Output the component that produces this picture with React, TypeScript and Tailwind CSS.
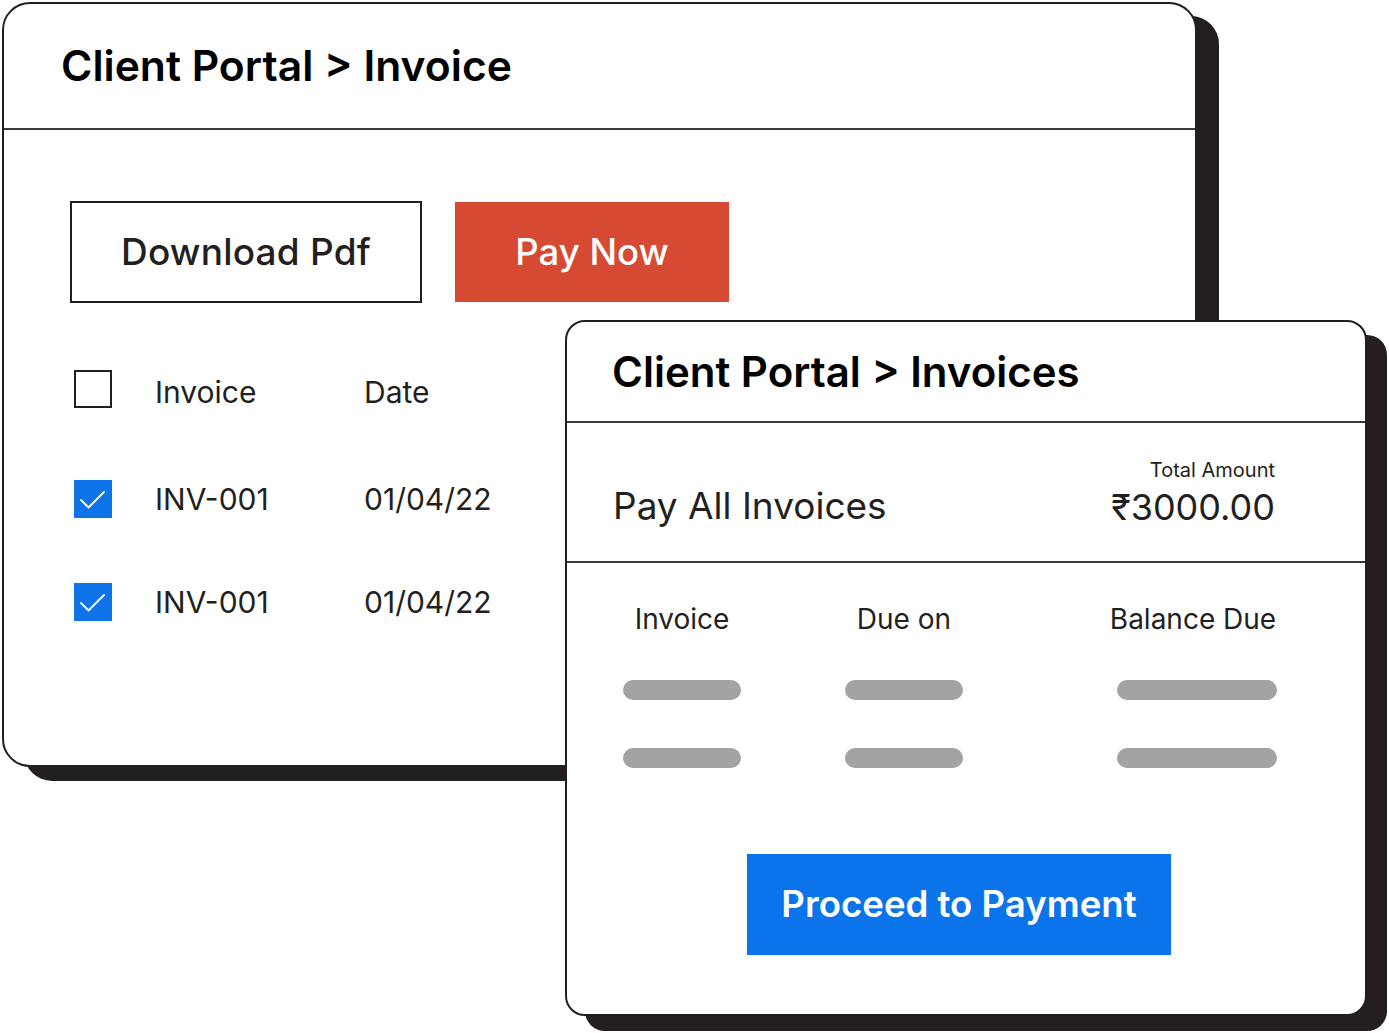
const ROWS = ['INV-001', 'INV-001']

function Box({ checked }: { checked?: boolean }) {
  return checked ? (
    <div className="w-[38px] h-[38px] bg-[#0f74ea] flex items-center justify-center">
      <svg width="38" height="38" viewBox="0 0 38 38" fill="none">
        <path d="M7 20 L14.5 27.5 L30 12" stroke="white" strokeWidth="1.8" strokeLinecap="round" strokeLinejoin="round" />
      </svg>
    </div>
  ) : (
    <div className="w-[38px] h-[38px] border-2 border-[#231f20] bg-white" />
  )
}

function Bar({ wide }: { wide?: boolean }) {
  return <div className={`h-[20px] rounded-full bg-[#a3a3a3] ${wide ? 'w-[160px]' : 'w-[118px]'}`} />
}

export default function App() {
  return (
    <div className="relative w-[1389px] h-[1033px] bg-white overflow-hidden text-[#231f20] font-['Inter','Liberation_Sans',sans-serif]">
      {/* back window */}
      <div className="absolute left-[2px] top-[2px] w-[1195px] h-[765px] bg-white border-2 border-[#231f20] rounded-[28px] shadow-[22px_14px_0_0_#231f20] flex flex-col">
        <div className="h-[126px] border-b-2 border-[#3a3a3a] flex items-center pl-[57px]">
          <h1 className="text-[42.6px] font-semibold text-black">Client Portal &gt; Invoice</h1>
        </div>
        <div className="pl-[66px] pt-[71px]">
          <div className="flex items-center gap-[33px]">
            <button className="w-[352px] h-[102px] border-2 border-[#231f20] text-[37px] font-medium tracking-[0.2px]">Download Pdf</button>
            <button className="w-[274px] h-[100px] bg-[#d64a33] text-white text-[36.5px] font-medium">Pay Now</button>
          </div>
          <div className="mt-[67px] pl-[4px] flex flex-col text-[30px] text-[#231f20]">
            <div className="h-[38px] flex items-center">
              <Box />
              <span className="ml-[43px] w-[209px] translate-y-[3px]">Invoice</span>
              <span className="translate-y-[3px]">Date</span>
            </div>
            <div className="h-[38px] mt-[72px] flex items-center">
              <Box checked />
              <span className="ml-[43px] w-[209px]">{ROWS[0]}</span>
              <span>01/04/22</span>
            </div>
            <div className="h-[38px] mt-[65px] flex items-center">
              <Box checked />
              <span className="ml-[43px] w-[209px]">{ROWS[1]}</span>
              <span>01/04/22</span>
            </div>
          </div>
        </div>
      </div>

      {/* front window */}
      <div className="absolute left-[565px] top-[320px] w-[802px] h-[696px] bg-white border-2 border-[#231f20] rounded-[20px] shadow-[20px_15px_0_0_#231f20] flex flex-col">
        <div className="h-[101px] border-b-2 border-[#3a3a3a] flex items-center pl-[45px]">
          <h2 className="text-[42px] font-semibold text-black">Client Portal &gt; Invoices</h2>
        </div>
        <div className="h-[140px] border-b-2 border-[#3a3a3a] flex items-end justify-between pl-[46px] pr-[90px] pb-[36px]">
          <span className="text-[37px] leading-none mb-[1px]">Pay All Invoices</span>
          <div className="flex flex-col items-end">
            <span className="text-[20px] leading-none mb-[9px]">Total Amount</span>
            <span className="text-[36px] leading-none">₹3000.00</span>
          </div>
        </div>
        <div className="pl-[56px] pt-[41px] grid grid-cols-[222px_272px_160px] text-[28px]">
          <div className="w-[118px] flex flex-col items-center gap-[46px]">
            <span className="leading-[30px] whitespace-nowrap">Invoice</span>
            <div className="flex flex-col gap-[48px]"><Bar /><Bar /></div>
          </div>
          <div className="w-[118px] flex flex-col items-center gap-[46px]">
            <span className="leading-[30px] whitespace-nowrap">Due on</span>
            <div className="flex flex-col gap-[48px]"><Bar /><Bar /></div>
          </div>
          <div className="w-[160px] flex flex-col items-center gap-[46px]">
            <span className="leading-[30px] whitespace-nowrap -translate-x-[4px]">Balance Due</span>
            <div className="flex flex-col gap-[48px]"><Bar wide /><Bar wide /></div>
          </div>
        </div>
        <button className="ml-[180px] mt-[86px] w-[424px] h-[101px] bg-[#0c74ea] text-white text-[36.6px] font-semibold">Proceed to Payment</button>
      </div>
    </div>
  )
}
